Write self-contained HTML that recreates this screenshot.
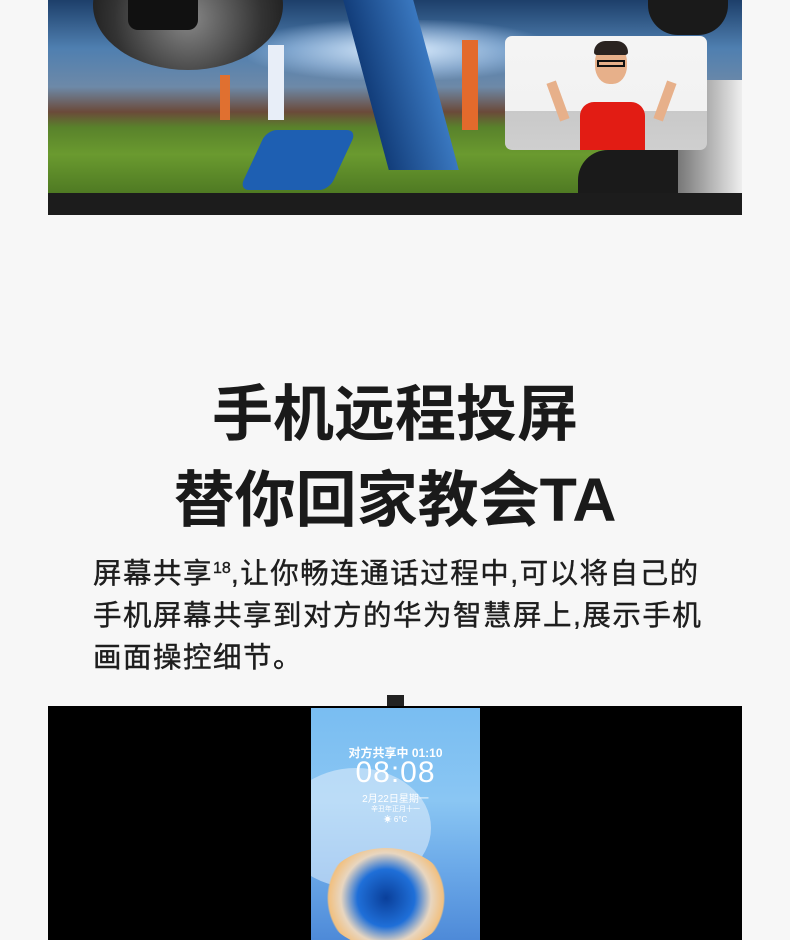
<!DOCTYPE html>
<html><head><meta charset="utf-8"><style>
body{margin:0;width:790px;height:940px;background:#f7f7f7;position:relative;overflow:hidden;font-family:"Liberation Sans","Noto Sans CJK SC",sans-serif}
.abs{position:absolute}
</style></head><body>
<!-- top TV -->
<div class="abs" style="left:48px;top:0;width:694px;height:215px;background:#111">
  <div class="abs" style="left:0;top:0;width:694px;height:193px;overflow:hidden;background:linear-gradient(180deg,#1d3f6a 0%,#4f7fb0 25%,#6d89a8 45%,#6b4a3a 58%,#59822b 66%,#6a9a2f 80%,#4f7a23 100%)">
    <div class="abs" style="left:200px;top:20px;width:300px;height:60px;background:radial-gradient(ellipse,#dfefff 0%,rgba(200,225,255,.4) 50%,transparent 75%)"></div>
    <div class="abs" style="left:45px;top:-60px;width:190px;height:130px;border-radius:50%;background:radial-gradient(circle at 50% 60%,#888,#333 60%,#111)"></div>
    <div class="abs" style="left:80px;top:-20px;width:70px;height:50px;background:#111;border-radius:10px"></div>
    <div class="abs" style="left:318px;top:0;width:70px;height:170px;background:linear-gradient(90deg,#123d7a,#3a78c0);transform:skewX(15deg)"></div>
    <div class="abs" style="left:205px;top:130px;width:90px;height:60px;background:#1e5fb2;transform:skewX(-25deg);border-radius:10px"></div>
    <div class="abs" style="left:220px;top:45px;width:16px;height:75px;background:#e8eef8"></div>
    <div class="abs" style="left:414px;top:40px;width:16px;height:90px;background:#e36a2c"></div>
    <div class="abs" style="left:172px;top:75px;width:10px;height:45px;background:#e07030"></div>
    <div class="abs" style="left:530px;top:150px;width:150px;height:43px;background:#1a1a1a;border-radius:30px 30px 0 0"></div>
    <div class="abs" style="left:630px;top:80px;width:64px;height:113px;background:linear-gradient(90deg,#777,#eee)"></div>
    <div class="abs" style="left:600px;top:0;width:80px;height:35px;background:#1a1a1a;border-radius:0 0 30px 30px"></div>
    <div class="abs" style="left:457px;top:36px;width:202px;height:114px;border-radius:7px;overflow:hidden;background:linear-gradient(180deg,#f4f4f4 0%,#f2f2f2 66%,#c9c9c9 66%,#cfcfcf 100%)">
      <div class="abs" style="left:75px;top:66px;width:65px;height:48px;background:#e21c14;border-radius:14px 14px 0 0"></div>
      <div class="abs" style="left:90px;top:8px;width:32px;height:40px;background:#e7b08a;border-radius:45%"></div>
      <div class="abs" style="left:89px;top:5px;width:34px;height:14px;background:#2a2320;border-radius:16px 16px 4px 4px"></div>
      <div class="abs" style="left:92px;top:24px;width:28px;height:7px;border:2px solid #111;box-sizing:border-box"></div>
      <div class="abs" style="left:48px;top:45px;width:10px;height:40px;background:#e7b08a;transform:rotate(-20deg)"></div>
      <div class="abs" style="left:155px;top:45px;width:10px;height:40px;background:#e7b08a;transform:rotate(20deg)"></div>
    </div>
  </div>
  <div class="abs" style="left:0;top:193px;width:694px;height:22px;background:#1c1c1c"></div>
</div>

<div class="abs" style="left:0;top:371px;width:790px;text-align:center;font-size:61px;font-weight:bold;color:#1a1a1a;line-height:86px">手机远程投屏<br>替你回家教会TA</div>

<div class="abs" style="left:93px;top:553px;width:680px;font-size:28.5px;letter-spacing:1.5px;color:#1e1e1e;line-height:42px;white-space:nowrap;-webkit-text-stroke:0.4px #1e1e1e">屏幕共享<sup style="font-size:16px;vertical-align:10px;line-height:0;letter-spacing:0">18</sup>,让你畅连通话过程中,可以将自己的<br>手机屏幕共享到对方的华为智慧屏上,展示手机<br>画面操控细节。</div>

<!-- bottom TV -->
<div class="abs" style="left:387px;top:695px;width:17px;height:12px;background:#222"></div>
<div class="abs" style="left:48px;top:706px;width:694px;height:234px;background:#000">
  <div class="abs" style="left:263px;top:2px;width:169px;height:232px;overflow:hidden;background:linear-gradient(180deg,#79bdf2 0%,#8ac6f3 40%,#6aa8e8 70%,#4e8ad8 100%);color:#fff;text-align:center">
    <div class="abs" style="left:-30px;top:60px;width:150px;height:120px;border-radius:50%;background:rgba(220,235,250,.6)"></div>
    <div class="abs" style="left:0;top:36px;width:169px;font-size:12px;font-weight:bold">对方共享中 01:10</div>
    <div class="abs" style="left:0;top:48px;width:169px;font-size:30px;font-weight:300;letter-spacing:1px">08:08</div>
    <div class="abs" style="left:0;top:82px;width:169px;font-size:10px">2月22日星期一</div>
    <div class="abs" style="left:0;top:96px;width:169px;font-size:7px">辛丑年正月十一</div>
    <div class="abs" style="left:0;top:106px;width:169px;font-size:8px">☀ 6°C</div>
    <div class="abs" style="left:10px;top:140px;width:130px;height:100px;border-radius:50%;background:radial-gradient(circle,#0a3f9a 0%,#1f6fd8 35%,#e8d6c0 55%,#f1c080 70%,transparent 72%)"></div>
  </div>
</div>
</body></html>
